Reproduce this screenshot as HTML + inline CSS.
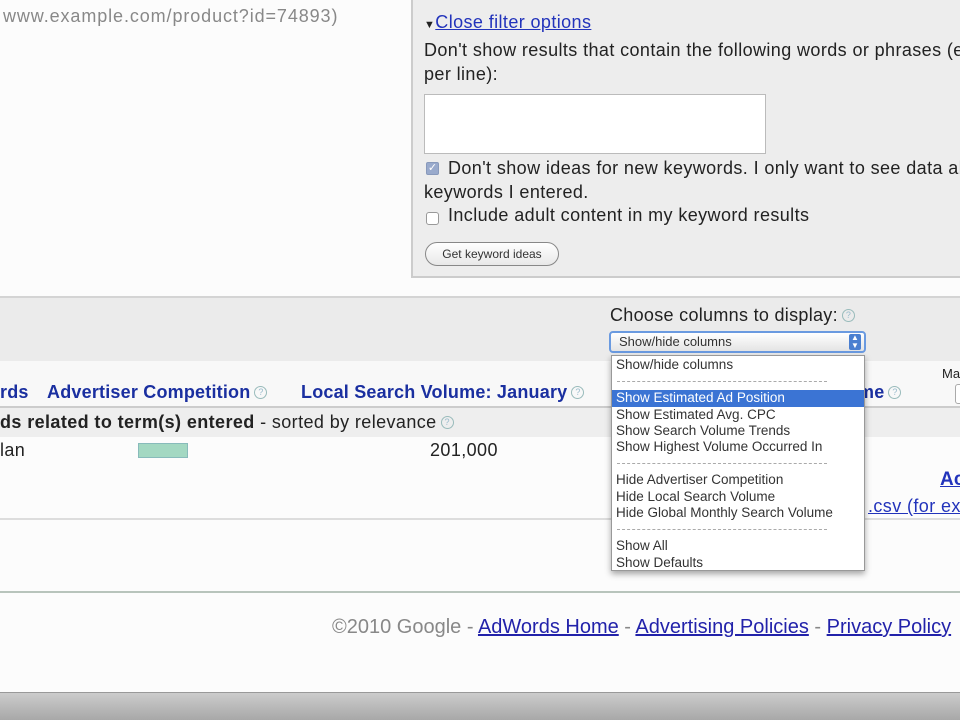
<!DOCTYPE html>
<html><head><meta charset="utf-8"><style>
*{margin:0;padding:0;box-sizing:border-box}
body{width:960px;height:720px;overflow:hidden;background:#fcfcfc;font-family:"Liberation Sans",Arial,sans-serif;position:relative;color:#222}
.a{position:absolute;white-space:nowrap}
.lk{color:#2222aa;text-decoration:underline}
.h{color:#1a2fa0;font-weight:bold;font-size:18px;letter-spacing:0.2px}
.q{display:inline-block;width:13px;height:13px;border:1px solid #9bb;border-radius:50%;color:#9bc;font-size:9px;text-align:center;line-height:11px;vertical-align:3px;margin-left:4px;font-weight:normal;letter-spacing:0}
.dd div{height:16.3px;line-height:16px;padding-left:4px;font-size:13.5px;color:#333}
.sep{border-top:1px dashed #aaa;height:0!important;margin:8px 8px 8px 5px;width:210px}
.t{font-size:18px;letter-spacing:0.4px}
</style></head><body>
<div class="a" style="left:0;top:0;width:412px;height:278px;background:#fcfcfc"></div>
<div class="a" style="left:3px;top:6px;font-size:18px;letter-spacing:0.9px;color:#888">www.example.com/product?id=74893)</div>
<div class="a" style="left:411px;top:0;width:549px;height:278px;background:#ededed;border-left:2px solid #ccc;border-bottom:2px solid #ccc"></div>
<div class="a t" style="left:424px;top:12px"><span style="font-size:11px;color:#222">▼</span><span class="lk" style="color:#2233bb">Close filter options</span></div>
<div class="a t" style="left:424px;top:38px;color:#222;line-height:24px">Don't show results that contain the following words or phrases (e<br>per line):</div>
<div class="a" style="left:424px;top:94px;width:342px;height:60px;background:#fff;border:1px solid #bbb"></div>
<div class="a" style="left:426px;top:162px;width:13px;height:13px;background:#9ac;border:1px solid #89b;border-radius:2px;color:#fff;font-size:11px;line-height:11px;text-align:center">✓</div>
<div class="a t" style="left:424px;top:156px;line-height:24px"><span style="padding-left:24px">Don't show ideas for new keywords. I only want to see data ab</span><br>keywords I entered.</div>
<div class="a" style="left:426px;top:212px;width:13px;height:13px;background:#fff;border:1px solid #999;border-radius:3px"></div>
<div class="a t" style="left:448px;top:205px">Include adult content in my keyword results</div>
<div class="a" style="left:425px;top:242px;width:134px;height:24px;border:1px solid #888;border-radius:12px;background:linear-gradient(#fff,#e8e8e8);font-size:12px;text-align:center;line-height:22px;color:#333">Get keyword ideas</div>

<div class="a" style="left:0;top:296px;width:960px;height:65px;background:#ebebeb;border-top:2px solid #d4d4d4"></div>
<div class="a" style="left:610px;top:305px;font-size:18px;letter-spacing:0.3px;color:#222">Choose columns to display:<span class="q">?</span></div>
<div class="a" style="left:609px;top:331px;width:257px;height:22px;border:2px solid #6a9ae0;border-radius:4px;background:linear-gradient(#fff,#e4e4e4);font-size:13px;line-height:18px;padding-left:8px;color:#333">Show/hide columns<span style="position:absolute;right:3px;top:1px;width:12px;height:16px;background:#4a7fd0;color:#fff;font-size:8px;line-height:8px;text-align:center;border-radius:2px">▲<br>▼</span></div>

<div class="a" style="left:0;top:361px;width:960px;height:47px;background:#f8f8f8;border-bottom:2px solid #ccc"></div>
<div class="a h" style="left:0;top:382px">rds</div>
<div class="a h" style="left:47px;top:382px">Advertiser Competition<span class="q">?</span></div>
<div class="a h" style="left:301px;top:382px">Local Search Volume: January<span class="q">?</span></div>
<div class="a h" style="left:858px;top:382px">me<span class="q">?</span></div>
<div class="a" style="left:942px;top:366px;font-size:13px">Ma</div>
<div class="a" style="left:955px;top:384px;width:10px;height:20px;border:1px solid #aaa;background:#fff;border-radius:3px"></div>
<div class="a" style="left:0;top:408px;width:960px;height:29px;background:#eeeeee"></div>
<div class="a t" style="left:0;top:412px"><b>ds related to term(s) entered</b> - sorted by relevance<span class="q">?</span></div>
<div class="a t" style="left:0;top:440px">lan</div>
<div class="a" style="left:138px;top:443px;width:50px;height:15px;background:#a3d8c2;border:1px solid #8bb"></div>
<div class="a t" style="left:430px;top:440px">201,000</div>
<div class="a" style="left:0;top:518px;width:960px;height:2px;background:#ddd"></div>
<div class="a lk h" style="left:940px;top:469px;font-size:19px;color:#2233bb">Ac</div>
<div class="a lk t" style="left:868px;top:496px;color:#2233bb">.csv (for ex</div>

<div class="a dd" style="left:611px;top:355px;width:254px;height:216px;background:#fff;border:1px solid #999;box-shadow:0 3px 6px rgba(0,0,0,.35);padding-top:1px">
<div>Show/hide columns</div><div class="sep"></div>
<div style="background:#3b74d4;color:#fff">Show Estimated Ad Position</div>
<div>Show Estimated Avg. CPC</div><div>Show Search Volume Trends</div><div>Show Highest Volume Occurred In</div><div class="sep"></div>
<div>Hide Advertiser Competition</div><div>Hide Local Search Volume</div><div>Hide Global Monthly Search Volume</div><div class="sep"></div>
<div>Show All</div><div>Show Defaults</div></div>

<div class="a" style="left:0;top:591px;width:960px;height:2px;background:#b8c4bc"></div>
<div class="a" style="left:332px;top:616px;font-size:20px;color:#888">©2010 Google - <span class="lk">AdWords Home</span> - <span class="lk">Advertising Policies</span> - <span class="lk">Privacy Policy</span></div>
<div class="a" style="left:0;top:692px;width:960px;height:28px;background:linear-gradient(#ccc,#a8a8a8);border-top:1px solid #999"></div>
</body></html>
